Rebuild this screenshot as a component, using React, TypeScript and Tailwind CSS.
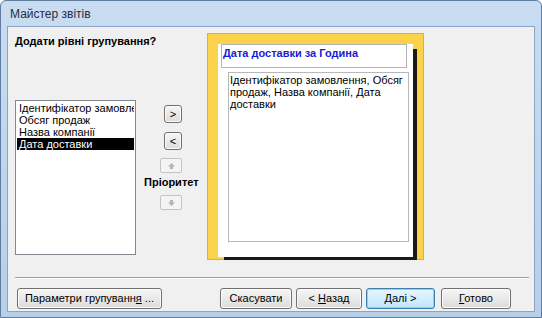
import React from "react";

const font = { fontFamily: '"Liberation Sans", Arial, sans-serif' };

function Btn({ children, className = "", def = false }: { children: React.ReactNode; className?: string; def?: boolean }) {
  return (
    <div
      className={
        "flex items-center justify-center rounded-[3px] border text-[11px] text-black bg-gradient-to-b " +
        (def
          ? "border-[#3c7fb1] from-[#eaf6fd] to-[#bee6fd] shadow-[inset_0_0_0_1px_#8fd0f4] "
          : "border-[#707070] from-[#f6f6f6] to-[#dcdcdc] shadow-[inset_0_0_0_1px_#fbfbfb] ") +
        className
      }
    >
      {children}
    </div>
  );
}

function Arrow({ up }: { up: boolean }) {
  return (
    <svg width="7" height="6" viewBox="0 0 7 6" className={up ? "" : "rotate-180"}>
      <path d="M3.5 0 L7 3.5 H5 V6 H2 V3.5 H0 Z" fill="#b5b5b5" />
    </svg>
  );
}

export default function App() {
  return (
    <div
      style={font}
      className="w-[542px] h-[318px] flex flex-col rounded-t-[6px] border border-[#5f7d9f] bg-gradient-to-b from-[#c9dcf1] to-[#b8cfe9] overflow-hidden"
    >
      <div className="h-[25px] flex items-center pl-[9px] text-[12px] text-[#1e2f45]">Майстер звітів</div>
      <div className="mx-[6px] mb-[5px] flex-1 flex flex-col border border-[#8aa5c4] bg-[#f0f0f0]">
        <div className="flex pt-[6px] pl-[7px] h-[235px]">
          <div className="w-[121px] flex flex-col">
            <div className="whitespace-nowrap text-[11px] font-bold text-black leading-[14px] pt-[1px]">Додати рівні групування?</div>
            <div className="mt-[52px] h-[155px] border border-[#828790] bg-white pt-[1px] px-[1px] overflow-hidden text-[11px] leading-[12px] text-black">
              <div className="pl-[2px] whitespace-nowrap overflow-hidden">Ідентифікатор замовлення</div>
              <div className="pl-[2px] whitespace-nowrap">Обсяг продаж</div>
              <div className="pl-[2px] whitespace-nowrap">Назва компанії</div>
              <div className="pl-[2px] whitespace-nowrap bg-black text-white">Дата доставки</div>
            </div>
          </div>
          <div className="w-[71px] flex flex-col">
            <Btn className="mt-[72px] ml-[28px] w-[18px] h-[18px]">&gt;</Btn>
            <Btn className="mt-[9px] ml-[28px] w-[18px] h-[18px]">&lt;</Btn>
            <div className="mt-[8px] ml-[24px] w-[22px] h-[15px] flex items-center justify-center rounded-[2px] border border-[#c4c4c4] bg-[#f4f4f4]">
              <Arrow up />
            </div>
            <div className="mt-[2px] ml-[8px] text-[11px] font-bold leading-[14px] text-black whitespace-nowrap">Пріоритет</div>
            <div className="mt-[6px] ml-[24px] w-[22px] h-[15px] flex items-center justify-center rounded-[2px] border border-[#c4c4c4] bg-[#f4f4f4]">
              <Arrow up={false} />
            </div>
          </div>
          <div className="w-[217px] h-[227px] border border-[#e8ad2c] bg-[#fdd24b] pl-[10px] pt-[6px]">
            <div className="relative w-[195px] h-[213px] bg-white">
              <div className="absolute left-[195px] top-[5px] w-[4px] h-[211px] bg-[#1a1a1a]" />
              <div className="absolute left-[6px] top-[213px] w-[193px] h-[3px] bg-[#1a1a1a]" />
              <div className="ml-[3px] mt-[4px] w-[186px] h-[24px] border border-[#b4b4b4] pl-[1px] pt-[2px] text-[11px] font-bold leading-[13px] text-[#1a1ad2]">
                Дата доставки за Година
              </div>
              <div className="ml-[10px] mt-[4px] w-[181px] h-[170px] border border-[#b8b8b8] pl-[1px] pt-[1px] text-[11px] leading-[12px] text-black">
                Ідентифікатор замовлення, Обсяг продаж, Назва компанії, Дата доставки
              </div>
            </div>
          </div>
        </div>
        <div className="mt-[15px] ml-[7px] w-[514px] h-[1px] bg-[#a0a0a0] border-b border-b-white box-content" />
        <div className="mt-[9px] flex h-[21px]">
          <Btn className="ml-[9px] w-[145px] h-[21px]">
            <span>
              Параметри групуванн<span className="underline">я</span> ...
            </span>
          </Btn>
          <Btn className="ml-[58px] w-[72px] h-[21px]">Скасувати</Btn>
          <Btn className="ml-[4px] w-[66px] h-[21px]">
            <span>
              &lt; <span className="underline">Н</span>азад
            </span>
          </Btn>
          <Btn def className="ml-[4px] w-[69px] h-[21px]">
            <span>
              <span className="underline">Д</span>алі &gt;
            </span>
          </Btn>
          <Btn className="ml-[6px] w-[70px] h-[21px]">
            <span>
              <span className="underline">Г</span>отово
            </span>
          </Btn>
        </div>
      </div>
    </div>
  );
}
